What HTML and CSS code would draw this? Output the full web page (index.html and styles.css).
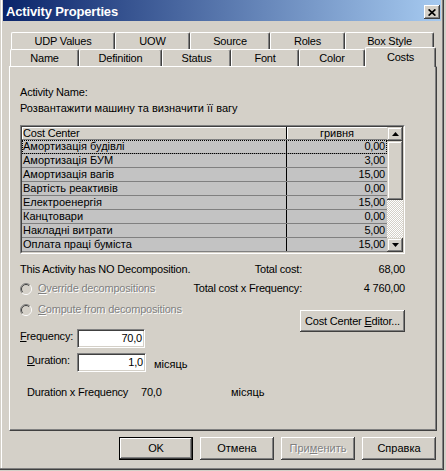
FILE: index.html
```html
<!DOCTYPE html>
<html>
<head>
<meta charset="utf-8">
<title>Activity Properties</title>
<link rel="stylesheet" href="styles.css">
</head>
<body>
<div class="window">
  <div class="titlebar">
    <span class="title">Activity Properties</span>
    <span class="close"><svg width="8" height="7" viewBox="0 0 8 7"><path d="M0.6 0.4L7.4 6.6M7.4 0.4L0.6 6.6" stroke="#000" stroke-width="1.7" fill="none"/></svg></span>
  </div>
  <div class="client">
    <div class="tabs">
      <div class="tabrow back">
        <div class="tab t-udp">UDP Values</div>
        <div class="tab t-uow">UOW</div>
        <div class="tab t-src">Source</div>
        <div class="tab t-roles">Roles</div>
        <div class="tab t-box">Box Style</div>
      </div>
      <div class="tabrow front">
        <div class="tab t-name">Name</div>
        <div class="tab t-def">Definition</div>
        <div class="tab t-status">Status</div>
        <div class="tab t-font">Font</div>
        <div class="tab t-color">Color</div>
        <div class="tab t-costs sel">Costs</div>
      </div>
    </div>
    <div class="panel">
      <div class="line">Activity Name:</div>
      <div class="line name-val cyr">Розвантажити машину та визначити її вагу</div>
      <div class="grid">
        <div class="grid-inner">
          <div class="grid-main">
            <div class="grow head"><div class="c1">Cost Center</div><div class="c2 center cyr">гривня</div></div>
            <div class="grow focus"><div class="c1 cyr">Амортизація будівлі</div><div class="c2">0,00</div></div>
            <div class="grow"><div class="c1 cyr">Амортизація БУМ</div><div class="c2">3,00</div></div>
            <div class="grow"><div class="c1 cyr">Амортизація вагів</div><div class="c2">15,00</div></div>
            <div class="grow"><div class="c1 cyr">Вартість реактивів</div><div class="c2">0,00</div></div>
            <div class="grow"><div class="c1 cyr">Електроенергія</div><div class="c2">15,00</div></div>
            <div class="grow"><div class="c1 cyr">Канцтовари</div><div class="c2">0,00</div></div>
            <div class="grow"><div class="c1 cyr">Накладні витрати</div><div class="c2">5,00</div></div>
            <div class="grow"><div class="c1 cyr">Оплата праці буміста</div><div class="c2">15,00</div></div>
          </div>
          <div class="vscroll">
            <div class="sbtn"><svg width="7" height="4" viewBox="0 0 7 4"><path d="M3.5 0L7 4H0z" fill="#000"/></svg></div>
            <div class="sbtn thumb"></div>
            <div class="track"></div>
            <div class="sbtn"><svg width="7" height="4" viewBox="0 0 7 4"><path d="M0 0H7L3.5 4z" fill="#000"/></svg></div>
          </div>
        </div>
      </div>
      <div class="info">
        <div class="line r1c1">This Activity has NO Decomposition.</div>
        <div class="line r1c2 right">Total cost:</div>
        <div class="line r1c3 right">68,00</div>
        <div class="line radio r2c1"><svg class="rb" width="12" height="12" viewBox="0 0 12 12"><circle cx="6" cy="6" r="5" fill="#d4d0c8"/><path d="M2.1 9.9A5.5 5.5 0 0 1 9.9 2.1" stroke="#808080" fill="none"/><path d="M9.9 2.1A5.5 5.5 0 0 1 2.1 9.9" stroke="#fff" fill="none"/><path d="M2.8 9.2A4.5 4.5 0 0 1 9.2 2.8" stroke="#404040" fill="none"/><path d="M9.2 2.8A4.5 4.5 0 0 1 2.8 9.2" stroke="#d4d0c8" fill="none"/></svg><span class="dis"><u>O</u>verride decompositions</span></div>
        <div class="line r2c2 right">Total cost x Frequency:</div>
        <div class="line r2c3 right">4 760,00</div>
        <div class="line radio r3c1"><svg class="rb" width="12" height="12" viewBox="0 0 12 12"><circle cx="6" cy="6" r="5" fill="#d4d0c8"/><path d="M2.1 9.9A5.5 5.5 0 0 1 9.9 2.1" stroke="#808080" fill="none"/><path d="M9.9 2.1A5.5 5.5 0 0 1 2.1 9.9" stroke="#fff" fill="none"/><path d="M2.8 9.2A4.5 4.5 0 0 1 9.2 2.8" stroke="#404040" fill="none"/><path d="M9.2 2.8A4.5 4.5 0 0 1 2.8 9.2" stroke="#d4d0c8" fill="none"/></svg><span class="dis"><u>C</u>ompute from decompositions</span></div>
        <div class="btn editor"><span>Cost Center <u>E</u>ditor...</span></div>
        <div class="fieldrow freq">
          <span class="flabel"><u>F</u>requency:</span>
          <span class="field">70,0</span>
        </div>
        <div class="fieldrow dur">
          <span class="flabel dlabel"><u>D</u>uration:</span>
          <span class="field">1,0</span>
          <span class="unit cyr">місяць</span>
        </div>
        <div class="line dxf">
          <span class="dxf-a">Duration x Frequency</span><span class="dxf-b">70,0</span><span class="cyr">місяць</span>
        </div>
      </div>
    </div>
    <div class="buttons">
      <div class="btn def">OK</div>
      <div class="btn cyr">Отмена</div>
      <div class="btn cyr"><span class="dis">При<u>м</u>енить</span></div>
      <div class="btn cyr">Справка</div>
    </div>
  </div>
</div>
</body>
</html>
```
FILE: styles.css
```css
* { box-sizing: border-box; }
html, body { margin: 0; padding: 0; }
body {
  width: 446px;
  height: 471px;
  overflow: hidden;
  background: #d4d0c8;
  font-family: "Liberation Sans", Arial, sans-serif;
  font-size: 11px;
  letter-spacing: -0.2px;
  color: #000;
}
.cyr { letter-spacing: 0; }
.window {
  width: 444px;
  height: 470px;
  padding: 0 3px 3px 3px;
  background: #d4d0c8;
  box-shadow: inset -1px -1px #404040, inset -2px -2px #808080, inset 1px 0 #d4d0c8, inset 2px 0 #fff;
  display: flex;
  flex-direction: column;
}
.titlebar {
  flex: none;
  height: 21px;
  padding: 3px 1px 0 3px;
  display: flex;
  align-items: center;
  background: linear-gradient(to right, #0a246a, #a6caf0);
}
.title {
  flex: 1;
  color: #fff;
  font-weight: bold;
  font-size: 13px;
  line-height: 18px;
  letter-spacing: -0.15px;
}
.close {
  width: 16px;
  height: 14px;
  background: #d4d0c8;
  box-shadow: inset -1px -1px #404040, inset 1px 1px #fff, inset -2px -2px #808080;
  display: flex;
  align-items: center;
  justify-content: center;
}
.client {
  flex: 1;
  padding: 11px 0 0 6px;
  display: flex;
  flex-direction: column;
}
.tabs { flex: none; height: 34px; }
.tabrow { display: flex; height: 17px; }
.tabrow.back { margin-left: 2px; }
.tabrow.front { margin-left: 1px; }
.tab {
  height: 17px;
  line-height: 16px;
  text-align: center;
  white-space: nowrap;
  background: #d4d0c8;
  border-top: 1px solid #fff;
  border-left: 1px solid #fff;
  border-right: 1px solid #404040;
  box-shadow: inset -1px 0 #808080;
  border-radius: 2px 2px 0 0;
}
.tab.sel {
  height: 20px;
  margin-top: -2px;
  padding-top: 1px;
  position: relative;
  z-index: 1;
}
.t-udp { width: 104px; }
.t-uow { width: 75px; }
.t-src { width: 80px; }
.t-roles { width: 75px; }
.t-box { width: 89px; }
.t-name { width: 69px; }
.t-def { width: 83px; }
.t-status { width: 69px; }
.t-font { width: 68px; }
.t-color { width: 66px; }
.t-costs { width: 71px; }
.panel {
  flex: none;
  width: 428px;
  height: 365px;
  border-top: 1px solid #fff;
  border-left: 1px solid #fff;
  border-right: 1px solid #404040;
  border-bottom: 1px solid #404040;
  box-shadow: inset -1px -1px #808080;
  padding: 19px 0 0 10px;
}
.line { height: 13px; line-height: 13px; white-space: nowrap; }
.name-val { margin-top: 3px; }
.grid {
  margin-top: 10px;
  width: 385px;
  height: 129px;
  border: 1px solid;
  border-color: #808080 #fff #fff #808080;
}
.grid-inner {
  height: 100%;
  display: flex;
  border: 1px solid;
  border-color: #404040 #d4d0c8 #d4d0c8 #404040;
}
.grid-main { width: 365px; display: flex; flex-direction: column; }
.grow {
  display: flex;
  height: 14px;
  flex: none;
  background: #c3c3c3;
  border-bottom: 1px solid #808080;
  line-height: 13px;
}
.grow .c1 { width: 264px; padding-left: 1px; white-space: nowrap; overflow: hidden; }
.grow .c2 { width: 101px; border-left: 1px solid #000; text-align: right; padding-right: 2px; }
.grow .c2.center { text-align: center; padding-right: 0; }
.grow.head { height: 13px; background: #d4d0c8; line-height: 12px; }
.grow.head .c1, .grow.head .c2 { box-shadow: inset 1px 1px #fff; }
.grow.focus { outline: 1px dotted #000; outline-offset: -1px; }
.vscroll { width: 16px; display: flex; flex-direction: column; }
.sbtn {
  height: 14px;
  flex: none;
  background: #d4d0c8;
  box-shadow: inset -1px -1px #404040, inset 1px 1px #d4d0c8, inset -2px -2px #808080, inset 2px 2px #fff;
  display: flex;
  align-items: center;
  justify-content: center;
}
.sbtn.thumb { height: 59px; }
.track {
  flex: 1;
  background: repeating-conic-gradient(#fff 0 25%, #d4d0c8 0 50%) 0 0 / 2px 2px;
}
.info {
  display: grid;
  grid-template-columns: 170px 112px 103px;
  grid-template-rows: 19px 21px 24px 24px 29px auto;
  margin-top: 9px;
  width: 385px;
}
.right { text-align: right; }
.r1c1 { grid-column: 1; grid-row: 1; }
.r1c2 { grid-column: 2; grid-row: 1; }
.r1c3 { grid-column: 3; grid-row: 1; }
.r2c1 { grid-column: 1; grid-row: 2; }
.r2c2 { grid-column: 2; grid-row: 2; }
.r2c3 { grid-column: 3; grid-row: 2; }
.r3c1 { grid-column: 1; grid-row: 3; }
.radio { display: flex; align-items: center; }
.rb { flex: none; margin-right: 6px; }
.dis { color: #808080; text-shadow: 1px 1px 0 #fff; }
.btn {
  width: 74px;
  height: 23px;
  background: #d4d0c8;
  box-shadow: inset -1px -1px #404040, inset 1px 1px #fff, inset -2px -2px #808080;
  display: flex;
  align-items: center;
  justify-content: center;
  line-height: 13px;
  white-space: nowrap;
}
.btn.def { border: 1px solid #000; }
.btn.editor {
  grid-column: 2 / 4;
  grid-row: 3 / 5;
  justify-self: end;
  align-self: start;
  margin-top: 7px;
  width: 105px;
  height: 22px;
}
.fieldrow { display: flex; align-items: flex-start; margin-top: 2px; white-space: nowrap; }
.freq { grid-column: 1; grid-row: 4; }
.dur { grid-column: 1 / 3; grid-row: 5; }
.flabel { width: 57px; line-height: 13px; margin-top: 1px; }
.dlabel { padding-left: 7px; }
.field {
  width: 68px;
  height: 19px;
  background: #fff;
  border: 1px solid;
  border-color: #808080 #fff #fff #808080;
  box-shadow: inset 1px 1px #404040, inset -1px -1px #d4d0c8;
  text-align: right;
  padding-right: 2px;
  line-height: 17px;
}
.dur .field { width: 69px; }
.unit { margin-left: 8px; margin-top: 5px; line-height: 13px; }
.dxf { grid-column: 1 / 4; grid-row: 6; margin-top: 6px; display: flex; }
.dxf-a { width: 121px; padding-left: 7px; }
.dxf-b { width: 90px; }
.buttons {
  flex: none;
  display: flex;
  justify-content: flex-end;
  gap: 7px;
  margin-top: 6px;
  width: 428px;
  padding-right: 1px;
}
```
